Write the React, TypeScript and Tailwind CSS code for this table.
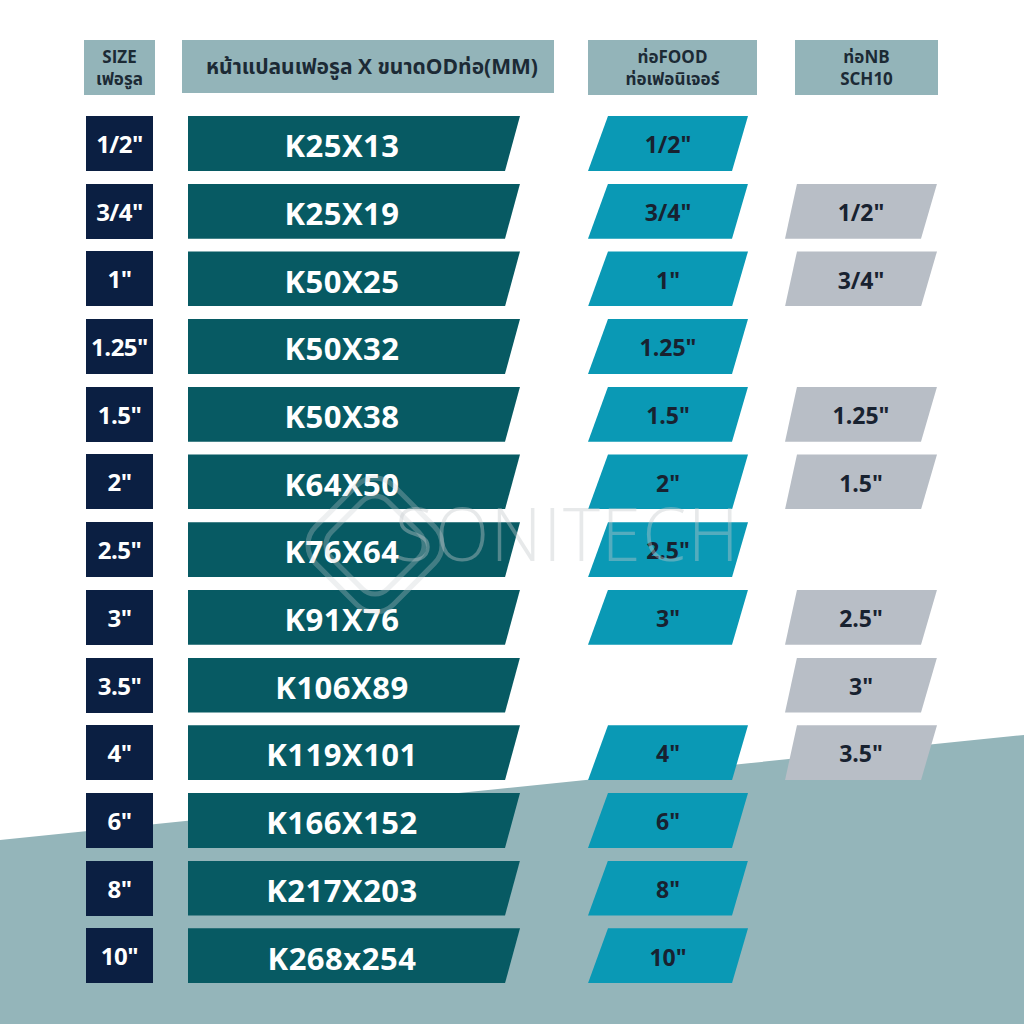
import React from 'react'

type Row = {
  size: string
  k: string
  food?: string
  nb?: string
}

const ROWS: Row[] = [
  { size: '1/2"', k: 'K25X13', food: '1/2"' },
  { size: '3/4"', k: 'K25X19', food: '3/4"', nb: '1/2"' },
  { size: '1"', k: 'K50X25', food: '1"', nb: '3/4"' },
  { size: '1.25"', k: 'K50X32', food: '1.25"' },
  { size: '1.5"', k: 'K50X38', food: '1.5"', nb: '1.25"' },
  { size: '2"', k: 'K64X50', food: '2"', nb: '1.5"' },
  { size: '2.5"', k: 'K76X64', food: '2.5"' },
  { size: '3"', k: 'K91X76', food: '3"', nb: '2.5"' },
  { size: '3.5"', k: 'K106X89', nb: '3"' },
  { size: '4"', k: 'K119X101', food: '4"', nb: '3.5"' },
  { size: '6"', k: 'K166X152', food: '6"' },
  { size: '8"', k: 'K217X203', food: '8"' },
  { size: '10"', k: 'K268x254', food: '10"' },
]

const FONT = "font-['Open_Sans','Noto_Sans','Noto_Sans_Thai','DejaVu_Sans',sans-serif]"

export default function App() {
  return (
    <div className={`relative w-[1024px] h-[1024px] overflow-hidden bg-white ${FONT}`}>
      {/* bottom diagonal background */}
      <svg className="absolute inset-0" width="1024" height="1024" viewBox="0 0 1024 1024">
        <polygon points="0,840 1024,735 1024,1024 0,1024" fill="#94b5ba" />
      </svg>

      <div className="relative pt-[40px]">
        {/* header */}
        <div className="flex pl-[84px] h-[55px] font-bold text-[#1c2a35]">
          <div className="w-[71px] bg-[#93b4b9] flex flex-col items-center justify-center text-[17px] leading-[22px]">
            <span>SIZE</span>
            <span>เฟอรูล</span>
          </div>
          <div className="ml-[27px] w-[372px] h-[53px] bg-[#93b4b9] flex items-center justify-center pl-[8px] text-[21px]">
            หน้าแปลนเฟอรูล X ขนาดODท่อ(MM)
          </div>
          <div className="ml-[34px] w-[169px] bg-[#93b4b9] flex flex-col items-center justify-center text-[17px] leading-[22px]">
            <span>ท่อFOOD</span>
            <span>ท่อเฟอนิเจอร์</span>
          </div>
          <div className="ml-[38px] w-[143px] bg-[#93b4b9] flex flex-col items-center justify-center text-[17px] leading-[22px]">
            <span>ท่อNB</span>
            <span>SCH10</span>
          </div>
        </div>

        {/* rows */}
        <div className="mt-[21px] flex flex-col gap-[12.7px] pl-[86px]">
          {ROWS.map((r) => (
            <div key={r.size} className="flex h-[55px]">
              <div className="w-[67px] bg-[#0b1f42] flex items-center justify-center pt-[1px] text-white font-bold text-[24px] tracking-[-0.5px]">
                {r.size}
              </div>
              <div className="ml-[35px] w-[332px] bg-[#075a63] [clip-path:polygon(0_0,100%_0,calc(100%-15px)_100%,0_100%)] flex items-center justify-center pr-[24px] pt-[4px] text-white font-bold text-[31px] tracking-[0.5px]">
                {r.k}
              </div>
              {r.food ? (
                <div className="ml-[68px] w-[160px] bg-[#0a99b5] [clip-path:polygon(20px_0,100%_0,calc(100%-16px)_100%,0_100%)] flex items-center justify-center pt-[2px] text-[#182230] font-bold text-[23px]">
                  {r.food}
                </div>
              ) : (
                <div className="ml-[68px] w-[160px]" />
              )}
              {r.nb ? (
                <div className="ml-[37px] w-[152px] bg-[#b8bec6] [clip-path:polygon(12px_0,100%_0,calc(100%-16px)_100%,0_100%)] flex items-center justify-center pt-[2px] text-[#182230] font-bold text-[23px]">
                  {r.nb}
                </div>
              ) : (
                <div className="ml-[37px] w-[152px]" />
              )}
            </div>
          ))}
        </div>
      </div>

      {/* faint watermark */}
      <div className="absolute left-[300px] top-[470px] pointer-events-none opacity-30">
        <svg width="150" height="150" viewBox="0 0 150 150" fill="none" stroke="#c9cfd2" strokeWidth="5">
          <rect x="35" y="35" width="80" height="80" rx="18" transform="rotate(45 75 75)" />
          <rect x="20" y="20" width="110" height="110" rx="26" transform="rotate(45 75 75)" />
        </svg>
      </div>
      <div className="absolute left-[395px] top-[496px] pointer-events-none text-[74px] leading-none font-light tracking-[2px] text-[#c4cacd] opacity-40 scale-x-[0.95] origin-left">
        SONITECH
      </div>
    </div>
  )
}
